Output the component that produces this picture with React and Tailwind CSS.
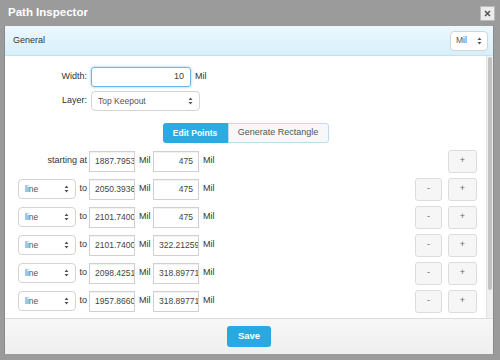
const rows = [
  { a: '2050.39363', b: '475' },
  { a: '2101.74003', b: '475' },
  { a: '2101.74003', b: '322.21259' },
  { a: '2098.42519', b: '318.89771' },
  { a: '1957.86603', b: '318.89771' },
  { a: '1957.86603', b: '318.89771' },
];

function Arrows() {
  return (
    <svg width="5" height="8" viewBox="0 0 5 8" className="shrink-0">
      <path d="M2.5 0.5 L4.5 3 L0.5 3 Z" fill="#555" />
      <path d="M2.5 7.5 L4.5 5 L0.5 5 Z" fill="#555" />
    </svg>
  );
}

function Select({ label, className = '' }) {
  return (
    <div className={`h-[20px] flex items-center justify-between px-[6px] bg-white border border-[#d4d4d4] rounded-[4px] text-[8.5px] text-[#555] ${className}`}>
      <span>{label}</span>
      <Arrows />
    </div>
  );
}

function Field({ value }) {
  const short = value.length < 5;
  return (
    <div className={`w-[46px] h-[21px] flex items-center overflow-hidden whitespace-nowrap px-[5px] bg-white border border-[#d0d0d0] shadow-[inset_0_1px_1px_rgba(0,0,0,0.06)] text-[8.5px] text-[#444] ${short ? 'justify-end' : 'justify-start'}`}>
      {value}
    </div>
  );
}

function SmallBtn({ children, className = '' }) {
  return (
    <div className={`h-[23px] flex items-center justify-center bg-[#f6f6f6] border border-[#dcdcdc] rounded-[3px] text-[9px] text-[#666] ${className}`}>
      {children}
    </div>
  );
}

function PointRow({ first, a, b }) {
  return (
    <div className="flex items-center h-[22px] shrink-0">
      <div className="w-[82px] flex items-center justify-between pl-[13px]">
        {first ? (
          <span className="ml-auto text-[9px] text-[#333]">starting at</span>
        ) : (
          <>
            <Select label="line" className="w-[58px]" />
            <span className="text-[9px] text-[#333]">to</span>
          </>
        )}
      </div>
      <div className="ml-[2px]"><Field value={a} /></div>
      <span className="w-[18px] pl-[4px] text-[9px] text-[#333]">Mil</span>
      <Field value={b} />
      <span className="pl-[4px] text-[9px] text-[#333]">Mil</span>
      <div className="ml-auto flex items-center gap-[6px] pr-[9px]">
        {!first && <SmallBtn className="w-[27px]">-</SmallBtn>}
        <SmallBtn className="w-[29px]">+</SmallBtn>
      </div>
    </div>
  );
}

export default function App() {
  return (
    <div className="w-[500px] h-[360px] bg-[#9b9b9b] flex flex-col overflow-hidden" style={{ fontFamily: '"Liberation Sans", Arial, sans-serif' }}>
      {/* title bar */}
      <div className="h-[26px] shrink-0 flex items-center pl-[8px] pr-[5px]">
        <span className="text-white font-bold text-[11.5px]">Path Inspector</span>
        <div className="ml-auto w-[15px] h-[15px] bg-[#ececec] border border-[#bbb] flex items-center justify-center">
          <svg width="7" height="7" viewBox="0 0 7 7">
            <path d="M1 1 L6 6 M6 1 L1 6" stroke="#555" strokeWidth="1.6" />
          </svg>
        </div>
      </div>

      {/* panel */}
      <div className="flex-1 ml-[4px] mr-[6px] mb-[6px] bg-white border-x border-[#8a8a8a] flex flex-col min-h-0">
        <div className="h-[30px] shrink-0 flex items-center pl-[8px] pr-[5px] bg-gradient-to-b from-[#ecf8fe] to-[#d8effb] border-b border-[#bfe3f5]">
          <span className="text-[9px] text-[#333]">General</span>
          <Select label="Mil" className="ml-auto w-[38px] !px-[5px]" />
        </div>

        <div className="flex-1 flex min-h-0">
          <div className="flex-1 flex flex-col overflow-hidden">
            <div className="flex items-center mt-[11px]">
              <span className="w-[82px] text-right text-[9px] text-[#333]">Width:</span>
              <div className="ml-[4px] w-[100px] h-[20px] flex items-center justify-end px-[6px] border border-[#6bb6ea] rounded-[3px] shadow-[0_0_3px_rgba(102,175,233,0.7)] text-[9px] text-[#444]">10</div>
              <span className="pl-[4px] text-[9px] text-[#333]">Mil</span>
            </div>
            <div className="flex items-center mt-[4px]">
              <span className="w-[82px] text-right text-[9px] text-[#333]">Layer:</span>
              <div className="ml-[4px]"><Select label="Top Keepout" className="w-[109px]" /></div>
            </div>

            <div className="flex justify-center mt-[12px] shrink-0">
              <div className="w-[65px] h-[20px] flex items-center justify-center bg-[#2aabe2] rounded-l-[3px] text-white font-bold text-[8.5px]">Edit Points</div>
              <div className="w-[101px] h-[20px] flex items-center justify-center bg-[#f8f8f8] border border-[#b9dcf0] rounded-r-[3px] text-[#555] text-[9px]">Generate Rectangle</div>
            </div>

            <div className="flex flex-col gap-[6px] mt-[7px]">
              <PointRow first a="1887.79534" b="475" />
              {rows.map((r, i) => (
                <PointRow key={i} a={r.a} b={r.b} />
              ))}
            </div>
          </div>

          {/* scrollbar */}
          <div className="w-[7px] shrink-0 bg-[#f0f0f0] border-l border-[#e4e4e4] pt-[1px]">
            <div className="h-[233px] mx-[1px] rounded-[3px] bg-[#c2c2c2]" />
          </div>
        </div>

        <div className="h-[36px] shrink-0 flex items-center justify-center bg-gradient-to-b from-[#f7f7f7] to-[#efefef] border-t border-[#dcdcdc]">
          <div className="w-[44px] h-[21px] flex items-center justify-center bg-[#29a9e1] rounded-[3px] text-white font-bold text-[9.5px]">Save</div>
        </div>
      </div>
    </div>
  );
}
